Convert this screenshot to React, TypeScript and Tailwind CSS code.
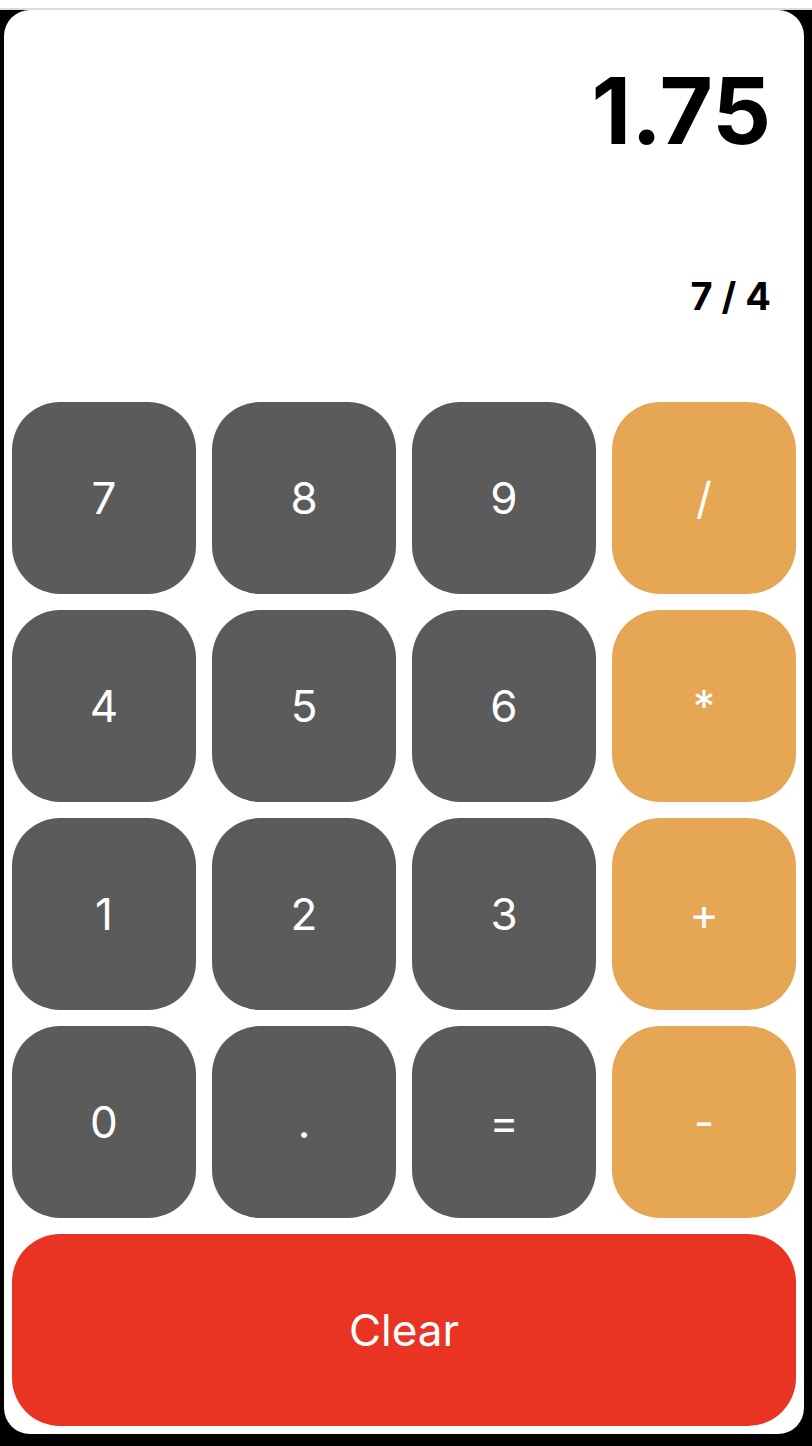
import React, { useState } from 'react';

const keys: { label: string; op?: boolean }[] = [
  { label: '7' },
  { label: '8' },
  { label: '9' },
  { label: '/', op: true },
  { label: '4' },
  { label: '5' },
  { label: '6' },
  { label: '*', op: true },
  { label: '1' },
  { label: '2' },
  { label: '3' },
  { label: '+', op: true },
  { label: '0' },
  { label: '.' },
  { label: '=' },
  { label: '-', op: true },
];

export default function App() {
  const [expression] = useState<string>('7 / 4');
  const [result] = useState<string>('1.75');

  return (
    <div
      className="flex flex-col h-screen w-full bg-black"
      style={{ fontFamily: 'Inter, "Noto Sans", sans-serif' }}
    >
      <div className="h-2 bg-white" />
      <div className="h-[2px] bg-[#dcdcdc]" />
      <div className="ml-1 mr-2 bg-white rounded-[26px] p-2 flex flex-col">
        <div className="h-[384px] flex flex-col items-end pr-[25px] pt-[47px]">
          <div className="text-[92px] leading-none font-bold text-black">
            {result}
          </div>
          <div className="mt-[120px] text-[38px] leading-none font-bold text-black">
            {expression}
          </div>
        </div>

        <div className="grid grid-cols-4 gap-4">
          {keys.map((key) => (
            <button
              key={key.label}
              className={`h-[192px] rounded-[48px] flex items-center justify-center text-white text-[44px] font-normal ${
                key.op ? 'bg-[#e5a754]' : 'bg-[#5b5b5b]'
              }`}
            >
              {key.label}
            </button>
          ))}
        </div>

        <button className="mt-4 h-[192px] rounded-[48px] bg-[#e93424] text-white text-[44px] flex items-center justify-center">
          Clear
        </button>
      </div>
    </div>
  );
}
